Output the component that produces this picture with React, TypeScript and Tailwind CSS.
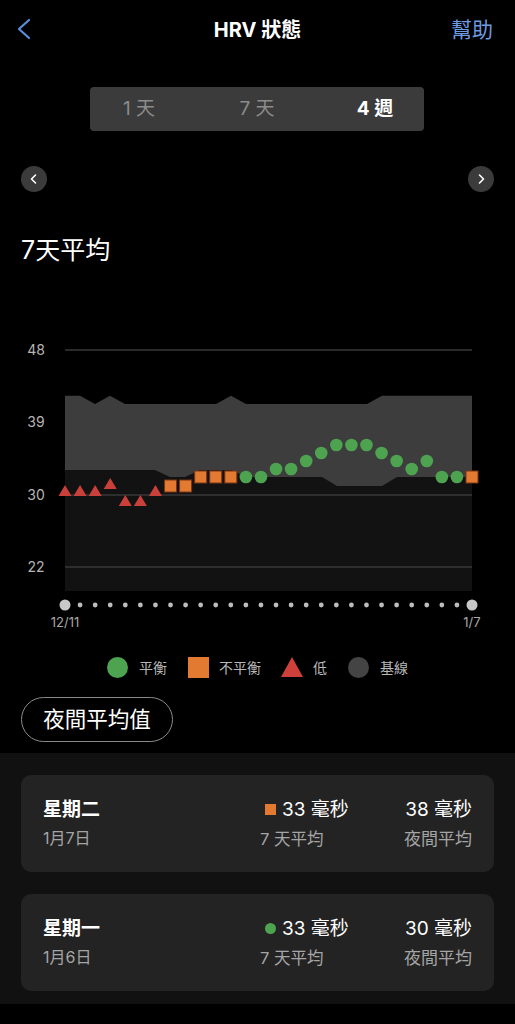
import React from 'react';

const FONT = { fontFamily: 'Inter, "Noto Sans CJK TC", "Noto Sans", sans-serif' };

// marker types: t = 低, s = 不平衡, c = 平衡
const points: [string, number][] = [
  ['t', 491], ['t', 491], ['t', 491], ['t', 484], ['t', 501], ['t', 501], ['t', 491],
  ['s', 486], ['s', 486], ['s', 477], ['s', 477], ['s', 477],
  ['c', 477], ['c', 477], ['c', 469], ['c', 469], ['c', 461], ['c', 453], ['c', 445],
  ['c', 445], ['c', 445], ['c', 453], ['c', 461], ['c', 469], ['c', 461], ['c', 477],
  ['c', 477], ['s', 477],
];

const X0 = 65;
const X1 = 472;
const step = (X1 - X0) / 27;

const band =
  '65,395.7 80,395.7 95,404 110,395.7 125,404 216,404 231,395.7 246,404 367,404 382,395.7 472,395.7 ' +
  '472,477 397,477 382,486 337,486 322,477 246,477 231,470 200,470 185,477 170,477 155,470 65,470';

function Marker({ kind, x, y }: { kind: string; x: number; y: number }) {
  if (kind === 't') {
    return <polygon points={`${x},${y - 6} ${x + 6.5},${y + 5} ${x - 6.5},${y + 5}`} fill="#c9403a" />;
  }
  if (kind === 's') {
    return <rect x={x - 6} y={y - 6} width={12} height={12} fill="#e27a32" stroke="#7a3414" strokeWidth={1} />;
  }
  return <circle cx={x} cy={y} r={6.3} fill="#4ea350" />;
}

function Chart() {
  return (
    <svg width={515} height={370} viewBox="0 265 515 370" className="block">
      {[['48', 350], ['39', 422], ['30', 495], ['22', 567]].map(([t, y]) => (
        <text key={t} x={36} y={Number(y) + 5} textAnchor="middle" fontSize={14} fill="#b5b5b5" style={FONT}>
          {t}
        </text>
      ))}
      <line x1={X0} x2={X1} y1={350} y2={350} stroke="#555" strokeWidth={1} />
      <rect x={X0} y={465} width={X1 - X0} height={126} fill="#121212" />
      <polygon points={band} fill="#3d3d3d" />
      <line x1={X0} x2={X1} y1={495} y2={495} stroke="#4a4a4a" strokeWidth={1} />
      <line x1={X0} x2={X1} y1={567} y2={567} stroke="#4a4a4a" strokeWidth={1} />
      {points.map(([k, y], i) => (
        <Marker key={i} kind={k} x={X0 + i * step} y={y} />
      ))}
      {points.map((_, i) => (
        <circle
          key={'d' + i}
          cx={X0 + i * step}
          cy={605}
          r={i === 0 || i === 27 ? 5.5 : 2.4}
          fill={i === 0 || i === 27 ? '#c8c8c8' : '#bdbdbd'}
        />
      ))}
      <text x={X0} y={627} textAnchor="middle" fontSize={13} fill="#a8a8a8" style={FONT}>12/11</text>
      <text x={X1} y={627} textAnchor="middle" fontSize={13} fill="#a8a8a8" style={FONT}>1/7</text>
    </svg>
  );
}

function DayCard({ day, date, avg, night, dot }: { day: string; date: string; avg: string; night: string; dot: 'square' | 'circle' }) {
  return (
    <div className="flex items-center h-[97px] rounded-[10px] bg-[#232323] pl-[22px] pr-[22px]">
      <div className="flex flex-col flex-1">
        <span className="text-[19px] font-bold text-white leading-[24px]">{day}</span>
        <span className="text-[16px] text-[#a5a5a5] leading-[22px] mt-[5px]">{date}</span>
      </div>
      <div className="flex flex-col w-[144px]">
        <div className="flex items-center ml-[5px] leading-[24px]">
          {dot === 'square' ? (
            <span className="w-[11px] h-[11px] bg-[#e27a32] mr-[6px]" />
          ) : (
            <span className="w-[11px] h-[11px] rounded-full bg-[#4ea350] mr-[6px]" />
          )}
          <span className="text-[19px] text-white">{avg}</span>
        </div>
        <span className="text-[16.5px] text-[#a5a5a5] leading-[22px] mt-[6px]">7 天平均</span>
      </div>
      <div className="flex flex-col items-end">
        <span className="text-[19px] text-white leading-[24px]">{night}</span>
        <span className="text-[17px] text-[#a5a5a5] leading-[22px] mt-[6px]">夜間平均</span>
      </div>
    </div>
  );
}

export default function App() {
  return (
    <div className="w-[515px] h-[1024px] bg-black overflow-hidden" style={FONT}>
      {/* Header */}
      <div className="relative h-[60px] flex items-center justify-center">
        <svg className="absolute left-[16px] top-[18px]" width={16} height={22} viewBox="0 0 16 22">
          <path d="M13 2 L3 11 L13 20" fill="none" stroke="#5b8fdc" strokeWidth={2.2} strokeLinecap="round" strokeLinejoin="round" />
        </svg>
        <span className="text-[20px] font-bold text-white">HRV 狀態</span>
        <span className="absolute right-[22px] top-[16px] text-[21px] text-[#6e9be0] leading-[28px]">幫助</span>
      </div>

      {/* Segmented control */}
      <div className="mt-[27px] ml-[90px] w-[334px] h-[44px] rounded-[4px] bg-[#3b3b3b] flex items-center justify-center gap-[38px]">
        <span className="w-[80px] text-center text-[19px] text-[#8c8c8c]">1 天</span>
        <span className="w-[80px] text-center text-[19px] text-[#8c8c8c]">7 天</span>
        <span className="w-[80px] text-center text-[19px] font-bold text-white">4 週</span>
      </div>

      {/* Pager */}
      <div className="mt-[35px] px-[21px] flex justify-between">
        <div className="w-[26px] h-[26px] rounded-full bg-[#3b3b3b] flex items-center justify-center">
          <svg width={10} height={12} viewBox="0 0 10 12">
            <path d="M6.5 2 L2.5 6 L6.5 10" fill="none" stroke="#fff" strokeWidth={1.6} strokeLinecap="round" strokeLinejoin="round" />
          </svg>
        </div>
        <div className="w-[26px] h-[26px] rounded-full bg-[#3b3b3b] flex items-center justify-center">
          <svg width={10} height={12} viewBox="0 0 10 12">
            <path d="M3.5 2 L7.5 6 L3.5 10" fill="none" stroke="#fff" strokeWidth={1.6} strokeLinecap="round" strokeLinejoin="round" />
          </svg>
        </div>
      </div>

      <div className="mt-[43px] ml-[21px] h-[30px] text-[25px] leading-[30px] text-white">7天平均</div>

      <Chart />

      {/* Legend */}
      <div className="mt-[21px] h-[22px] flex items-center justify-center text-[14px] text-[#b8b8b8]">
        <span className="w-[21px] h-[21px] rounded-full bg-[#4ea350]" />
        <span className="ml-[11px]">平衡</span>
        <span className="ml-[21px] w-[21px] h-[21px] bg-[#e27a32]" />
        <span className="ml-[10px]">不平衡</span>
        <svg className="ml-[20px]" width={22} height={20} viewBox="0 0 22 20">
          <polygon points="11,0 22,20 0,20" fill="#d0403a" />
        </svg>
        <span className="ml-[10px]">低</span>
        <span className="ml-[21px] w-[21px] h-[21px] rounded-full bg-[#444]" />
        <span className="ml-[11px]">基線</span>
      </div>

      <div className="mt-[19px] ml-[21px] w-[152px] h-[45px] rounded-full border-[1.5px] border-[#8a8a8a] flex items-center justify-center text-[21.5px] text-white">
        夜間平均值
      </div>

      {/* Daily list */}
      <div className="mt-[11px] bg-[#111111] px-[21px] pt-[22px] pb-[13px] flex flex-col gap-[22px]">
        <DayCard day="星期二" date="1月7日" avg="33 毫秒" night="38 毫秒" dot="square" />
        <DayCard day="星期一" date="1月6日" avg="33 毫秒" night="30 毫秒" dot="circle" />
      </div>
    </div>
  );
}
